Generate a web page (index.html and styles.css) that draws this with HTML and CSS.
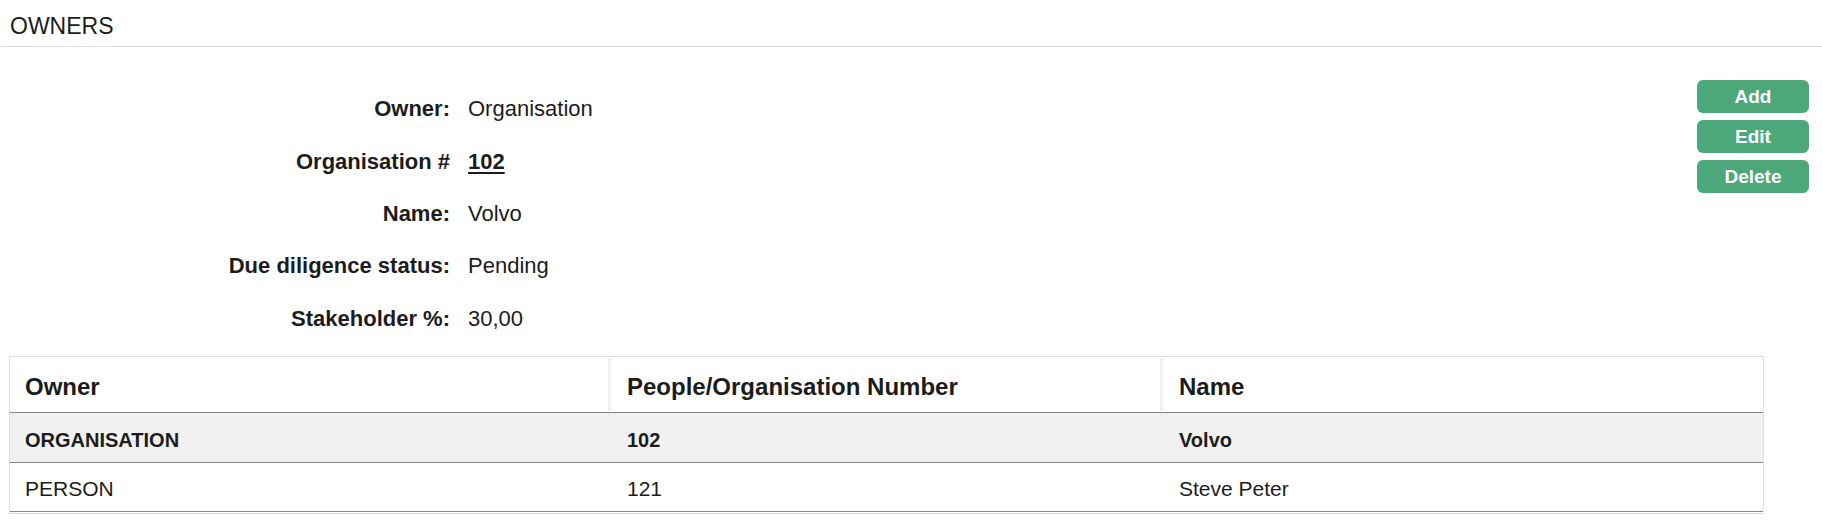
FILE: index.html
```html
<!DOCTYPE html>
<html lang="en">
<head>
<meta charset="utf-8">
<title>Owners</title>
<link rel="stylesheet" href="styles.css">
</head>
<body>
  <header class="page-title">OWNERS</header>
  <section class="details">
    <dl class="fields">
      <dt>Owner:</dt><dd>Organisation</dd>
      <dt>Organisation #</dt><dd><a class="link" href="#">102</a></dd>
      <dt>Name:</dt><dd>Volvo</dd>
      <dt>Due diligence status:</dt><dd>Pending</dd>
      <dt>Stakeholder %:</dt><dd>30,00</dd>
    </dl>
    <div class="actions">
      <button class="btn">Add</button>
      <button class="btn">Edit</button>
      <button class="btn">Delete</button>
    </div>
  </section>
  <div class="table">
    <div class="row head">
      <div class="cell">Owner</div>
      <div class="cell">People/Organisation Number</div>
      <div class="cell">Name</div>
    </div>
    <div class="row selected">
      <div class="cell">ORGANISATION</div>
      <div class="cell">102</div>
      <div class="cell">Volvo</div>
    </div>
    <div class="row">
      <div class="cell">PERSON</div>
      <div class="cell">121</div>
      <div class="cell">Steve Peter</div>
    </div>
  </div>
</body>
</html>
```

FILE: styles.css
```css
* { box-sizing: border-box; }
html, body { margin: 0; padding: 0; background: #fff; }
body {
  font-family: "Liberation Sans", Arial, sans-serif;
  color: #1c1c1c;
  width: 1822px;
}
.page-title {
  font-size: 23px;
  line-height: 30px;
  padding: 11px 10px 5px;
  border-bottom: 1px solid #dedede;
}
.details {
  display: flex;
  justify-content: space-between;
  padding: 33px 13px 0 0;
}
.fields {
  margin: 0;
  padding-top: 14.4px;
  display: grid;
  grid-template-columns: 450px auto;
  column-gap: 18px;
  row-gap: 22.3px;
  font-size: 22px;
  line-height: 30px;
}
.fields dt {
  font-weight: bold;
  text-align: right;
}
.fields dd { margin: 0; }
.link {
  color: #1c1c1c;
  font-weight: bold;
  text-decoration: underline;
  text-underline-offset: 3px;
}
.actions {
  display: flex;
  flex-direction: column;
  gap: 7px;
}
.btn {
  width: 112px;
  height: 33px;
  border: 0;
  border-radius: 6px;
  background: #4ca87b;
  color: #fff;
  font-family: "Liberation Sans", Arial, sans-serif;
  font-weight: bold;
  font-size: 19px;
  padding: 0;
}
.table {
  margin: 22.4px 0 0 9px;
  width: 1755px;
  border: 1px solid #dedede;
  padding-bottom: 1px;
}
.row {
  display: grid;
  grid-template-columns: 601px 552px 1fr;
  border-bottom: 1px solid #858585;
  font-size: 21px;
  line-height: 25px;
}
.row .cell {
  padding: 13px 15px 10px;
}
.row.head {
  font-size: 24px;
  font-weight: bold;
  line-height: 27px;
}
.row.head .cell {
  padding: 15px 15px 11px;
  border-right: 3px solid #f1f1f1;
  margin: 1px 0 1px;
}
.row.head .cell:last-child { border-right: 0; }
.row.selected {
  background: #f1f1f1;
  font-weight: bold;
  font-size: 20px;
}
.row.selected .cell { padding-top: 15px; padding-bottom: 9px; }
.row .cell + .cell { padding-left: 16px; }
```
